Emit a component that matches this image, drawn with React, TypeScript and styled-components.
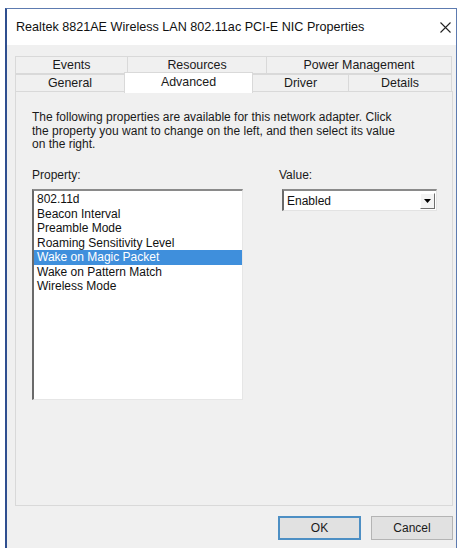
import styled, { createGlobalStyle } from "styled-components";

const GlobalStyle = createGlobalStyle`
  html, body {
    margin: 0;
    padding: 0;
    background: #ffffff;
    font-family: "Liberation Sans", Arial, sans-serif;
    font-size: 12px;
    color: #000000;
    overflow: hidden;
  }
`;

const Window = styled.div`
  margin: 8px 0 0 5px;
  width: 452px;
  height: 540px;
  box-sizing: border-box;
  border: 1px solid #5d7bb0;
  border-left: 2px solid #2f4f8f;
  border-bottom: none;
  display: flex;
  flex-direction: column;
  background: #f0f0f0;
`;

const TitleBar = styled.div`
  height: 36px;
  background: #ffffff;
  display: flex;
  align-items: center;
  justify-content: space-between;
  padding: 0 0 0 9px;
  flex-shrink: 0;
`;

const TitleText = styled.span`
  font-size: 12.6px;
  color: #111111;
`;

const CloseButton = styled.button`
  width: 22px;
  height: 24px;
  border: none;
  background: transparent;
  padding: 0;
  display: flex;
  align-items: center;
  justify-content: center;
  cursor: pointer;
`;

const Body = styled.div`
  flex: 1;
  display: flex;
  flex-direction: column;
  padding: 11px 3px 0 8px;
`;

const TabRow = styled.div`
  display: flex;
  height: ${(p: { $h: number }) => p.$h}px;
`;

const Tab = styled.div<{ $w: number; $selected?: boolean }>`
  width: ${(p) => p.$w}px;
  box-sizing: border-box;
  display: flex;
  align-items: center;
  justify-content: center;
  font-size: 12.4px;
  color: #1a1a1a;
  background: ${(p) => (p.$selected ? "#ffffff" : "#f0f0f0")};
  border: 1px solid #d9d9d9;
  border-bottom: ${(p) => (p.$selected ? "none" : "1px solid #d9d9d9")};
  margin-left: -1px;
  &:first-child {
    margin-left: 0;
  }
  ${(p) =>
    p.$selected &&
    `
    position: relative;
    z-index: 2;
    height: calc(100% + 3px);
    margin-top: -2px;
    padding-bottom: 2px;
  `}
`;

const Panel = styled.div`
  height: 415px;
  box-sizing: border-box;
  border: 1px solid #d9d9d9;
  margin-top: -1px;
  padding: 19px 16px 0 16px;
  background: #f0f0f0;
`;

const Description = styled.p`
  margin: 0;
  font-size: 12px;
  line-height: 13.5px;
  color: #1a1a1a;
`;

const Fields = styled.div`
  display: grid;
  grid-template-columns: 211px 1fr;
  column-gap: 36px;
  margin-top: 17px;
`;

const Field = styled.div`
  display: flex;
  flex-direction: column;
`;

const Label = styled.label`
  font-size: 12px;
  line-height: 13.5px;
  color: #1a1a1a;
  margin-bottom: 7px;
`;

const ListBox = styled.ul`
  list-style: none;
  margin: 0;
  padding: 1px 0 0 0;
  height: 211px;
  box-sizing: border-box;
  background: #ffffff;
  border-top: 2px solid #8a8a8a;
  border-left: 2px solid #6a6a6a;
  border-right: 1px solid #e6e6e6;
  border-bottom: 1px solid #e6e6e6;
`;

const ListItem = styled.li<{ $selected?: boolean }>`
  height: 14.5px;
  line-height: 14.5px;
  padding-left: 3px;
  font-size: 12px;
  white-space: nowrap;
  color: ${(p) => (p.$selected ? "#ffffff" : "#111111")};
  background: ${(p) => (p.$selected ? "#3f8fdc" : "transparent")};
`;

const Select = styled.div`
  margin-left: 3px;
  width: 155px;
  height: 22px;
  box-sizing: border-box;
  background: #ffffff;
  border-top: 2px solid #8a8a8a;
  border-left: 2px solid #6a6a6a;
  border-right: 1px solid #e3e3e3;
  border-bottom: 1px solid #e3e3e3;
  display: flex;
  align-items: center;
  justify-content: space-between;
  padding: 0 1px 0 3px;
`;

const SelectValue = styled.span`
  font-size: 12px;
  color: #111111;
`;

const ArrowButton = styled.span`
  width: 15px;
  height: 16px;
  box-sizing: border-box;
  background: #f4f4f4;
  border-right: 1px solid #6e6e6e;
  border-bottom: 1px solid #6e6e6e;
  border-top: 1px solid #ffffff;
  border-left: 1px solid #ffffff;
  display: flex;
  align-items: center;
  justify-content: center;
`;

const Footer = styled.div`
  display: flex;
  justify-content: flex-end;
  gap: 10px;
  margin-top: 10px;
`;

const Button = styled.button<{ $default?: boolean }>`
  width: ${(p) => (p.$default ? 83 : 82)}px;
  height: 24px;
  box-sizing: border-box;
  font-family: "Liberation Sans", Arial, sans-serif;
  font-size: 12px;
  color: #1a1a1a;
  background: #e1e1e1;
  border: ${(p) => (p.$default ? "2px solid #4d8fc4" : "1px solid #b4b4b4")};
  padding: 0;
`;

const topTabs = [
  { label: "Events", w: 113 },
  { label: "Resources", w: 140 },
  { label: "Power Management", w: 186 },
];

const bottomTabs = [
  { label: "General", w: 110 },
  { label: "Advanced", w: 129, selected: true },
  { label: "Driver", w: 97 },
  { label: "Details", w: 104 },
];

const properties = [
  "802.11d",
  "Beacon Interval",
  "Preamble Mode",
  "Roaming Sensitivity Level",
  "Wake on Magic Packet",
  "Wake on Pattern Match",
  "Wireless Mode",
];

export default function App() {
  return (
    <>
      <GlobalStyle />
      <Window>
        <TitleBar>
          <TitleText>Realtek 8821AE Wireless LAN 802.11ac PCI-E NIC Properties</TitleText>
          <CloseButton aria-label="Close">
            <svg width="11" height="11" viewBox="0 0 11 11">
              <path d="M0.5 0.5 L10.5 10.5 M10.5 0.5 L0.5 10.5" stroke="#222" strokeWidth="1.1" />
            </svg>
          </CloseButton>
        </TitleBar>
        <Body>
          <TabRow $h={18}>
            {topTabs.map((t) => (
              <Tab key={t.label} $w={t.w}>
                {t.label}
              </Tab>
            ))}
          </TabRow>
          <TabRow $h={18}>
            {bottomTabs.map((t) => (
              <Tab key={t.label} $w={t.w} $selected={t.selected}>
                {t.label}
              </Tab>
            ))}
          </TabRow>
          <Panel>
            <Description>
              The following properties are available for this network adapter. Click
              <br />
              the property you want to change on the left, and then select its value
              <br />
              on the right.
            </Description>
            <Fields>
              <Field>
                <Label>Property:</Label>
                <ListBox>
                  {properties.map((p) => (
                    <ListItem key={p} $selected={p === "Wake on Magic Packet"}>
                      {p}
                    </ListItem>
                  ))}
                </ListBox>
              </Field>
              <Field>
                <Label>Value:</Label>
                <Select>
                  <SelectValue>Enabled</SelectValue>
                  <ArrowButton>
                    <svg width="7" height="4" viewBox="0 0 7 4">
                      <path d="M0 0 H7 L3.5 4 Z" fill="#000" />
                    </svg>
                  </ArrowButton>
                </Select>
              </Field>
            </Fields>
          </Panel>
          <Footer>
            <Button $default>OK</Button>
            <Button>Cancel</Button>
          </Footer>
        </Body>
      </Window>
    </>
  );
}
